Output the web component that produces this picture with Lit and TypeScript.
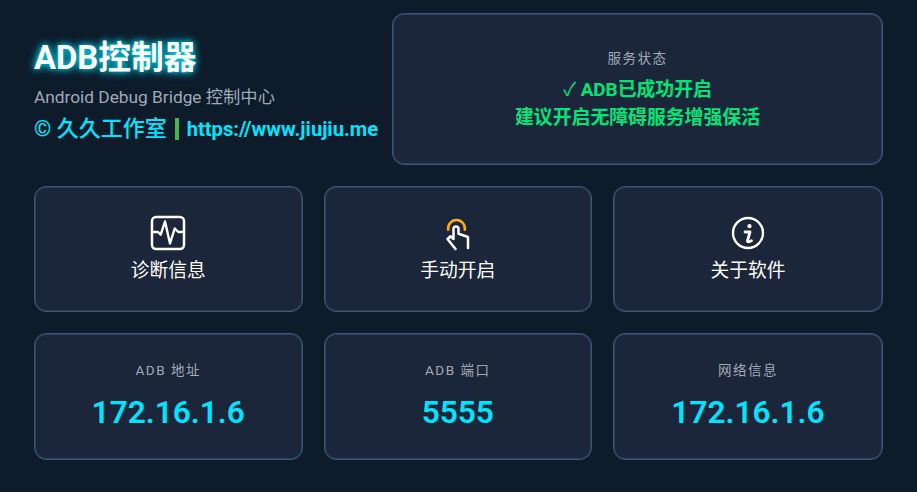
import { LitElement, html, css } from "lit";
import { customElement } from "lit/decorators.js";

@customElement("app-root")
export class AppRoot extends LitElement {
  static styles = css`
    :host {
      display: block;
      width: 917px;
      height: 492px;
      box-sizing: border-box;
      background: #0d1b2a;
      padding: 13px 34px 32px 34px;
      font-family: Roboto, "Noto Sans CJK SC", sans-serif;
      color: #fff;
      overflow: hidden;
    }
    .page { display: flex; flex-direction: column; gap: 21px; height: 100%; }
    .top { display: flex; gap: 14px; height: 152px; }
    .head { width: 344px; flex: none; display: flex; flex-direction: column; justify-content: center; box-sizing: border-box; padding-top: 3px; }
    h1 {
      margin: 0;
      font-size: 32.8px;
      line-height: 38px;
      font-weight: 700;
      color: #fff;
      text-shadow: 0 0 10px #00e5ff, 0 0 5px rgba(0, 229, 255, 0.6);
      white-space: nowrap;
    }
    .sub { margin-top: 9px; font-size: 17.3px; line-height: 22px; color: #a0aab6; white-space: nowrap; }
    .brand { margin-top: 8px; display: flex; align-items: center; color: #00e5ff; font-weight: 700; white-space: nowrap; line-height: 26px; }
    .brand .c { font-size: 22px; font-weight: 500; }
    .brand .bar { width: 4px; height: 22px; background: #4caf50; margin: 0 8px; flex: none; }
    .brand .u { font-size: 20.1px; }
    .card {
      background: #1b263b;
      border: 1px solid #3f5675;
      box-shadow: inset 0 0 0 1px #2c3f5b;
      border-radius: 12px;
      box-sizing: border-box;
      display: flex;
      flex-direction: column;
      align-items: center;
      justify-content: center;
    }
    .status { flex: 1; padding-top: 2.5px; }
    .label { font-size: 13.5px; line-height: 18px; letter-spacing: 1.5px; color: #a0aab6; white-space: nowrap; }
    .ok { margin-top: 8.5px; font-size: 18.85px; line-height: 28px; font-weight: 700; color: #00e676; text-align: center; }
    .check { font-weight: 400; }
    .row { display: grid; grid-template-columns: 268.5px 268.5px 1fr; gap: 21px; height: 126px; flex: none; }
    .row.last { height: 127px; }
    .btn { gap: 6px; padding-top: 2px; }
    .btn svg { width: 36px; height: 36px; display: block; }
    .btn span { font-size: 18.75px; line-height: 28px; color: #fff; white-space: nowrap; }
    .val { margin-top: 15px; font-size: 31.6px; line-height: 38px; font-weight: 600; color: #00e5ff; white-space: nowrap; }
  `;

  render() {
    return html`<div class="page">
      <div class="top">
        <div class="head">
          <h1>ADB控制器</h1>
          <div class="sub">Android Debug Bridge 控制中心</div>
          <div class="brand"><span class="c">© 久久工作室</span><i class="bar"></i><span class="u">https://www.jiujiu.me</span></div>
        </div>
        <div class="card status">
          <div class="label">服务状态</div>
          <div class="ok"><span class="check">✓</span> ADB已成功开启<br />建议开启无障碍服务增强保活</div>
        </div>
      </div>
      <div class="row">
        <div class="card btn">
          <svg viewBox="0 0 36 36" fill="none" stroke="#fff" stroke-linecap="round" stroke-linejoin="round">
            <rect x="2" y="2" width="32" height="32" rx="4" stroke-width="2.500"/>
            <path d="M2 17h6l2.700 2.700L15 6.500l5 22L24.700 13.500 28.300 17H34" stroke-width="2.400"/>
          </svg>
          <span>诊断信息</span>
        </div>
        <div class="card btn">
          <svg viewBox="0 0 36 36" fill="none" stroke-linecap="round" stroke-linejoin="round">
            <path d="M8.200 14.700A8.400 8.400 0 1 1 24.800 14.700" stroke="#ffb300" stroke-width="2.500"/>
            <path d="M13.500 24V14a2.500 2.500 0 0 1 5 0v4.700L28 22V33M13.500 24l-3-2.700-3 2.700 8 10" stroke="#fff" stroke-width="2.500"/>
          </svg>
          <span>手动开启</span>
        </div>
        <div class="card btn">
          <svg viewBox="0 0 36 36" fill="none" stroke="#fff">
            <circle cx="18" cy="18" r="15" stroke-width="2.400"/>
            <circle cx="19.500" cy="11.200" r="2.100" fill="#fff" stroke="none"/>
            <path d="M15 17h5l-2.500 8.500c-.3 1 .5 1.500 1.500 1.200l2.500-1" stroke-width="2.800" stroke-linecap="round" stroke-linejoin="round"/>
          </svg>
          <span>关于软件</span>
        </div>
      </div>
      <div class="row last">
        <div class="card"><div class="label">ADB 地址</div><div class="val">172.16.1.6</div></div>
        <div class="card"><div class="label">ADB 端口</div><div class="val">5555</div></div>
        <div class="card"><div class="label">网络信息</div><div class="val">172.16.1.6</div></div>
      </div>
    </div>`;
  }
}
